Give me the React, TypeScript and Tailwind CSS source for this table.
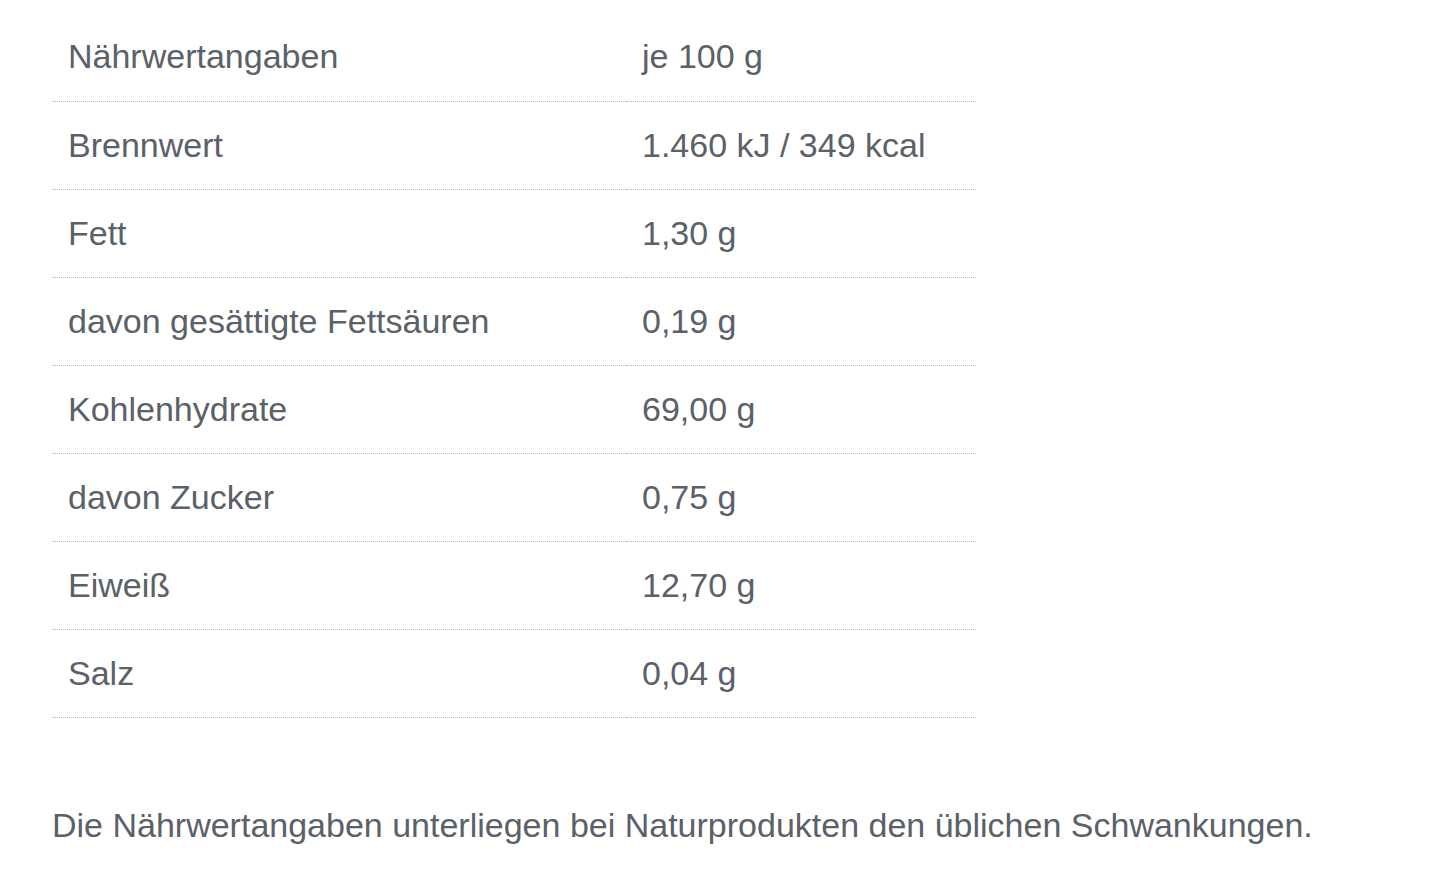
const rows: [string, string][] = [
  ["Nährwertangaben", "je 100 g"],
  ["Brennwert", "1.460 kJ / 349 kcal"],
  ["Fett", "1,30 g"],
  ["davon gesättigte Fettsäuren", "0,19 g"],
  ["Kohlenhydrate", "69,00 g"],
  ["davon Zucker", "0,75 g"],
  ["Eiweiß", "12,70 g"],
  ["Salz", "0,04 g"],
];

export default function App() {
  return (
    <div
      className="min-h-screen bg-white px-[52px] pt-[13px] text-[#5a6168] antialiased"
      style={{ fontFamily: '"Liberation Sans", Arial, sans-serif' }}
    >
      <table className="w-[924px] border-collapse text-[34px]">
        <tbody>
          {rows.map(([label, value]) => (
            <tr key={label} className="h-[88px]">
              <td className="w-[574px] border-b border-dotted border-[#b8b8b8] pl-4 align-middle">{label}</td>
              <td className="border-b border-dotted border-[#b8b8b8] pl-4 align-middle">{value}</td>
            </tr>
          ))}
        </tbody>
      </table>
      <p className="mt-[85px] text-[34px] leading-[44px]">
        Die Nährwertangaben unterliegen bei Naturprodukten den üblichen Schwankungen.
      </p>
    </div>
  );
}
